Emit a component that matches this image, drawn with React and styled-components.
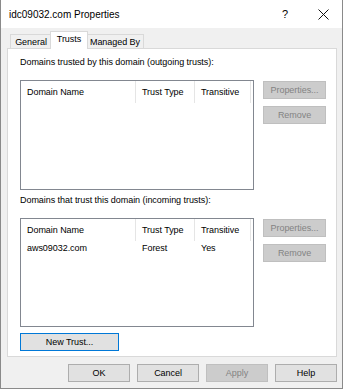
import styled, { createGlobalStyle } from "styled-components";

const GlobalStyle = createGlobalStyle`
  html, body {
    margin: 0;
    padding: 0;
    background: #ffffff;
  }
  body {
    font-family: "Liberation Sans", Arial, sans-serif;
    font-size: 9px;
    letter-spacing: -0.05px;
    color: #000;
  }
`;

const outgoing = [];
const incoming = [{ name: "aws09032.com", type: "Forest", transitive: "Yes" }];

const columns = [
  { key: "name", label: "Domain Name", width: 115 },
  { key: "type", label: "Trust Type", width: 59 },
  { key: "transitive", label: "Transitive", width: 56 },
];

const TrustList = ({ rows }) => (
  <ListBox>
    <HeaderRow>
      {columns.map((c) => (
        <HeaderCell key={c.key} $width={c.width}>
          {c.label}
        </HeaderCell>
      ))}
    </HeaderRow>
    {rows.map((r) => (
      <DataRow key={r.name}>
        {columns.map((c) => (
          <DataCell key={c.key} $width={c.width}>
            {r[c.key]}
          </DataCell>
        ))}
      </DataRow>
    ))}
  </ListBox>
);

const TrustSection = ({ label, rows, height }) => (
  <>
    <SectionLabel>{label}</SectionLabel>
    <SectionRow>
      <ListWrap $height={height}>
        <TrustList rows={rows} />
      </ListWrap>
      <SideButtons>
        <Button disabled>Properties...</Button>
        <Button disabled>Remove</Button>
      </SideButtons>
    </SectionRow>
  </>
);

export default function App() {
  return (
    <>
      <GlobalStyle />
      <Window>
        <TitleBar>
          <Title>idc09032.com Properties</Title>
          <HelpGlyph>?</HelpGlyph>
          <CloseButton>
            <svg width="11" height="11" viewBox="0 0 11 11">
              <path d="M0.5 0.5 L10.5 10.5 M10.5 0.5 L0.5 10.5" stroke="#111" strokeWidth="1" />
            </svg>
          </CloseButton>
        </TitleBar>
        <Body>
          <TabRow>
            <Tab $width={42}>General</Tab>
            <Tab $width={38} $active>
              Trusts
            </Tab>
            <Tab $width={58}>Managed By</Tab>
          </TabRow>
          <Panel>
            <TrustSection
              label="Domains trusted by this domain (outgoing trusts):"
              rows={outgoing}
              height={110}
            />
            <Spacer />
            <TrustSection
              label="Domains that trust this domain (incoming trusts):"
              rows={incoming}
              height={109}
            />
            <NewTrustRow>
              <Button $primary $width={99}>
                New Trust...
              </Button>
            </NewTrustRow>
          </Panel>
          <Footer>
            <Button $width={62}>OK</Button>
            <Button $width={62}>Cancel</Button>
            <Button $width={62} disabled>
              Apply
            </Button>
            <Button $width={62}>Help</Button>
          </Footer>
        </Body>
      </Window>
    </>
  );
}

const Window = styled.div`
  width: 343px;
  height: 389px;
  box-sizing: border-box;
  border: 1px solid #8a8a8a;
  border-top: none;
  display: flex;
  flex-direction: column;
  background: #f0f0f0;
`;

const TitleBar = styled.div`
  height: 28px;
  background: #ffffff;
  display: flex;
  align-items: center;
  padding-left: 8px;
  flex-shrink: 0;
`;

const Title = styled.div`
  flex: 1;
  font-size: 10px;
  letter-spacing: 0;
  color: #000;
`;

const HelpGlyph = styled.div`
  width: 10px;
  font-size: 11px;
  text-align: center;
  margin-right: 14px;
`;

const CloseButton = styled.div`
  width: 38px;
  height: 28px;
  display: flex;
  align-items: center;
  justify-content: center;
`;

const Body = styled.div`
  flex: 1;
  display: flex;
  flex-direction: column;
  padding: 3px 5px 0 6px;
`;

const TabRow = styled.div`
  display: flex;
  align-items: flex-end;
  height: 18px;
  padding-left: 3px;
  position: relative;
  z-index: 1;
`;

const Tab = styled.div`
  box-sizing: border-box;
  width: ${(p) => p.$width}px;
  height: ${(p) => (p.$active ? 18 : 15)}px;
  margin: ${(p) => (p.$active ? "0 -2px" : "0")};
  background: ${(p) => (p.$active ? "#ffffff" : "#f0f0f0")};
  border: 1px solid #d9d9d9;
  border-bottom: ${(p) => (p.$active ? "none" : "1px solid #d9d9d9")};
  display: flex;
  align-items: ${(p) => (p.$active ? "flex-start" : "center")};
  padding-top: ${(p) => (p.$active ? "2px" : "0")};
  justify-content: center;
  white-space: nowrap;
  position: relative;
  z-index: ${(p) => (p.$active ? 2 : 1)};
`;

const Panel = styled.div`
  height: 309px;
  box-sizing: border-box;
  margin-top: -1px;
  background: #ffffff;
  border: 1px solid #d9d9d9;
  padding: 7px 0 0 12px;
  display: flex;
  flex-direction: column;
`;

const SectionLabel = styled.div`
  height: 13px;
  line-height: 13px;
  margin-bottom: 11px;
`;

const SectionRow = styled.div`
  display: flex;
  gap: 9px;
`;

const ListWrap = styled.div`
  width: 234px;
  height: ${(p) => p.$height}px;
`;

const ListBox = styled.div`
  box-sizing: border-box;
  height: 100%;
  border: 1px solid #828790;
  background: #ffffff;
`;

const HeaderRow = styled.div`
  display: flex;
  height: 22px;
`;

const HeaderCell = styled.div`
  box-sizing: border-box;
  width: ${(p) => p.$width}px;
  padding-left: 6px;
  line-height: 22px;
  border-right: 1px solid #e5e5e5;
  white-space: nowrap;
  overflow: hidden;
`;

const DataRow = styled.div`
  display: flex;
  height: 15px;
`;

const DataCell = styled.div`
  box-sizing: border-box;
  width: ${(p) => p.$width}px;
  padding-left: 6px;
  line-height: 15px;
  white-space: nowrap;
`;

const SideButtons = styled.div`
  display: flex;
  flex-direction: column;
  gap: 7px;
  padding-top: 1px;
`;

const Button = styled.button`
  box-sizing: border-box;
  width: ${(p) => p.$width || 63}px;
  height: 18px;
  padding: 0;
  margin: 0;
  font-family: "Liberation Sans", Arial, sans-serif;
  font-size: 9px;
  letter-spacing: -0.05px;
  color: #000;
  background: #e1e1e1;
  border: 1px solid ${(p) => (p.$primary ? "#0078d7" : "#adadad")};
  border-radius: 0;
  &:disabled {
    background: #cccccc;
    border-color: #bfbfbf;
    color: #838383;
  }
`;

const Spacer = styled.div`
  height: 4px;
`;

const NewTrustRow = styled.div`
  margin-top: 6px;
`;

const Footer = styled.div`
  display: flex;
  justify-content: flex-end;
  gap: 7px;
  margin-top: 7px;
`;
